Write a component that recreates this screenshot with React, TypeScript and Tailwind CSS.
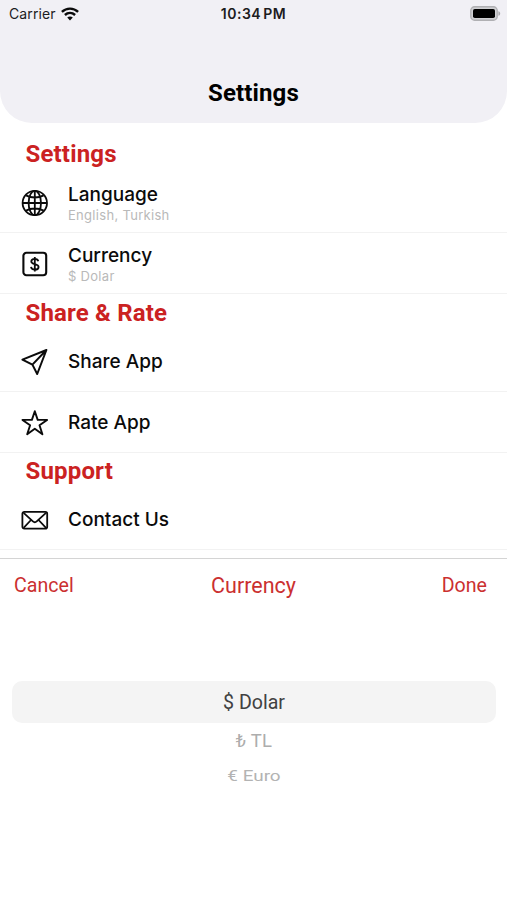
import React from 'react';

type RowProps = {
  icon: React.ReactNode;
  title: string;
  subtitle?: string;
};

const GlobeIcon = () => (
  <svg viewBox="0 0 28 28" className="w-7 h-7" fill="none" stroke="#0b0b0b" strokeWidth="1.8">
    <circle cx="13.8" cy="14" r="12.2" />
    <ellipse cx="13.8" cy="14" rx="6.2" ry="12.2" />
    <path d="M13.8 1.8v24.4M1.6 14H26M5 6.4c5 2.8 12.6 2.8 17.6 0M5 21.6c5-2.8 12.6-2.8 17.6 0" />
  </svg>
);

const DollarIcon = () => (
  <svg viewBox="0 0 28 28" className="w-7 h-7" fill="none" stroke="#0b0b0b">
    <rect x="2.4" y="2.8" width="22.8" height="22.4" rx="3" strokeWidth="2.1" />
    <path
      d="M17.3 11.2c-.3-1.5-1.6-2.4-3.5-2.4-2 0-3.5 1-3.5 2.6 0 3.6 7.3 1.7 7.3 5.5 0 1.7-1.6 2.7-3.7 2.7-2.2 0-3.7-1-3.9-2.7M13.8 7v14.4"
      strokeWidth="1.8"
    />
  </svg>
);

const PlaneIcon = () => (
  <svg viewBox="0 0 28 28" className="w-7 h-7" fill="none" stroke="#0b0b0b" strokeWidth="2" strokeLinejoin="round">
    <path d="M25.4 2L1.4 11.6l10 5L16.2 26zM25.4 2L11.4 16.6" />
  </svg>
);

const StarIcon = () => (
  <svg viewBox="0 0 28 28" className="w-7 h-7" fill="none" stroke="#0b0b0b" strokeWidth="1.9" strokeLinejoin="round">
    <path d="M13.8 2.2l2.9 8.7h9.4l-7.6 5.4 2.9 9-7.6-5.5-7.6 5.5 2.9-9-7.6-5.4h9.4z" />
  </svg>
);

const MailIcon = () => (
  <svg viewBox="0 0 28 28" className="w-7 h-7" fill="none" stroke="#0b0b0b" strokeWidth="1.8" strokeLinejoin="round">
    <rect x="1.4" y="5.8" width="24.8" height="16.9" rx="1.9" />
    <path d="M2.6 6.8l9.3 8.6c1.1 1 2.7 1 3.8 0L25 6.8M2.6 21.8l7.4-7.8M25 21.8l-7.4-7.8" />
  </svg>
);

const WifiIcon = () => (
  <svg viewBox="0 0 18 14" className="w-[18px] h-[14px]" fill="none" stroke="#0b0b0b" strokeWidth="2.4">
    <path d="M.9 4.8C5.5.5 12.5.5 17.1 4.8M3.9 8c3-2.8 7.2-2.8 10.2 0" />
    <path d="M9 13.5l-2.8-3c1.6-1.4 4-1.4 5.6 0z" fill="#0b0b0b" stroke="none" />
  </svg>
);

const BatteryIcon = () => (
  <svg viewBox="0 0 31 15" className="w-[31px] h-[15px]">
    <rect x=".8" y=".8" width="26.4" height="13.4" rx="3.8" fill="#d0d0d3" stroke="#b0b0b3" strokeWidth="1.4" />
    <rect x="3" y="3" width="22" height="9" rx="1.8" fill="#000" />
    <path d="M28.4 5.2c2.4.7 2.4 3.9 0 4.6z" fill="#a9a9ac" />
  </svg>
);

const SectionTitle = ({ children }: { children: React.ReactNode }) => (
  <h2 className="pl-[25.5px] font-[Roboto,sans-serif] text-[24px] leading-9 font-bold tracking-[0.17px] text-[#cb2222]">
    {children}
  </h2>
);

const Row = ({ icon, title, subtitle }: RowProps) => (
  <li className="flex items-center h-[61px] pt-[2px] pl-[21px] gap-[19px] border-b border-[#f2f2f2]">
    {icon}
    <div className={subtitle ? 'pt-px' : 'pb-px'}>
      <p className="text-[19px] leading-[22px] font-medium text-[#0b0b0b]">{title}</p>
      {subtitle && (
        <p className="text-[13px] leading-[18px] tracking-[0.3px] text-[#b9b9b9]">{subtitle}</p>
      )}
    </div>
  </li>
);

const App = () => {
  return (
    <div className="flex flex-col w-[507px] h-[900px] overflow-hidden bg-white font-[Inter,sans-serif]">
      <header className="flex flex-col justify-between h-[123px] shrink-0 rounded-b-[32px] bg-[#f1f0f5]">
        <div className="grid grid-cols-3 items-center h-[27px] px-[6px] text-[14px] text-[#1c1c1e]">
          <div className="flex items-center gap-[5px] pl-[3px]">
            <span className="tracking-[0.1px]">Carrier</span>
            <WifiIcon />
          </div>
          <span className="text-center font-semibold tracking-[0.5px] [word-spacing:-2px]">10:34 PM</span>
          <div className="flex justify-end">
            <BatteryIcon />
          </div>
        </div>
        <h1 className="pb-[14px] text-center font-[Roboto,sans-serif] text-[24px] leading-8 font-bold tracking-[0.12px] text-black">
          Settings
        </h1>
      </header>

      <main className="h-[435px] shrink-0 pt-[13px] overflow-hidden">
        <SectionTitle>Settings</SectionTitle>
        <ul>
          <Row icon={<GlobeIcon />} title="Language" subtitle="English, Turkish" />
          <Row icon={<DollarIcon />} title="Currency" subtitle="$ Dolar" />
        </ul>
        <div className="pt-px">
          <SectionTitle>Share &amp; Rate</SectionTitle>
        </div>
        <ul>
          <Row icon={<PlaneIcon />} title="Share App" />
          <Row icon={<StarIcon />} title="Rate App" />
        </ul>
        <SectionTitle>Support</SectionTitle>
        <ul>
          <Row icon={<MailIcon />} title="Contact Us" />
        </ul>
      </main>

      <section className="flex-1 border-t border-[#d4d4d4] font-[Roboto,sans-serif]">
        <div className="grid grid-cols-3 items-center h-[53px] px-[14px] text-[19.6px] text-[#cb3030]">
          <button className="text-left">Cancel</button>
          <span className="pt-px text-center text-[21.5px]">Currency</span>
          <button className="pr-[6px] text-right">Done</button>
        </div>
        <ul className="mt-[69px] pl-3 pr-[11px] text-center">
          <li className="h-[42px] rounded-[10px] bg-[#f4f4f4] text-[19.6px] leading-[43px] text-[#414141]">$ Dolar</li>
          <li className="h-[37px] text-[18.5px] leading-[37px] tracking-[0.3px] text-[#adadad]">₺ TL</li>
          <li className="h-[31px] text-[15.5px] leading-[32px] text-[#b3b3b3] scale-x-[1.22]">€ Euro</li>
        </ul>
      </section>
    </div>
  );
};

export default App;
